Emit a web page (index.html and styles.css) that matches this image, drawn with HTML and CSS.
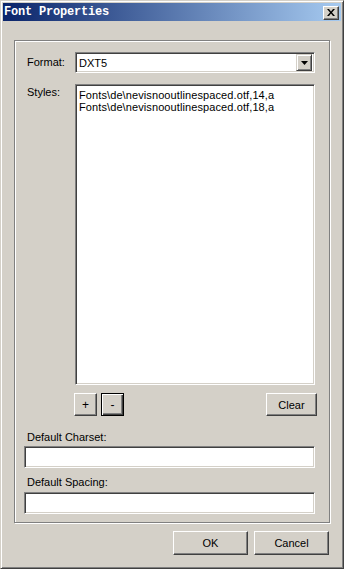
FILE: index.html
```html
<!DOCTYPE html>
<html lang="en">
<head>
    <meta charset="UTF-8">
    <meta name="viewport" content="width=device-width, initial-scale=1.0">
    <title>Font Properties</title>
    <link rel="stylesheet" href="styles.css">
</head>
<body>
    <div class="window">
        <div class="titlebar">
            <span class="title">Font Properties</span>
            <button class="close-btn" aria-label="Close">
                <svg width="8" height="7" viewBox="0 0 8 7">
                    <path d="M0 0h2l2 2.5L6 0h2L5 3.5 8 7H6L4 4.5 2 7H0l3-3.5z" fill="#000"/>
                </svg>
            </button>
        </div>

        <div class="client">
            <div class="group">
                <div class="row">
                    <label class="row-label">Format:</label>
                    <div class="combo sunken">
                        <span class="combo-text">DXT5</span>
                        <span class="drop-btn">
                            <svg width="7" height="4" viewBox="0 0 7 4"><path d="M0 0h7L3.5 4z" fill="#000"/></svg>
                        </span>
                    </div>
                </div>

                <div class="row row-styles">
                    <label class="row-label">Styles:</label>
                    <div class="listbox sunken">
                        <div class="list-item">Fonts\de\nevisnooutlinespaced.otf,14,a</div>
                        <div class="list-item">Fonts\de\nevisnooutlinespaced.otf,18,a</div>
                    </div>
                </div>

                <div class="list-buttons">
                    <button class="btn btn-small">+</button>
                    <button class="btn btn-small btn-default">-</button>
                    <button class="btn btn-clear">Clear</button>
                </div>

                <label class="field-label">Default Charset:</label>
                <div class="edit sunken"></div>

                <label class="field-label field-label-2">Default Spacing:</label>
                <div class="edit sunken edit-2"></div>
            </div>

            <div class="dialog-buttons">
                <button class="btn btn-dialog">OK</button>
                <button class="btn btn-dialog">Cancel</button>
            </div>
        </div>
    </div>
</body>
</html>
```

FILE: styles.css
```css
* {
    box-sizing: border-box;
}
body {
    margin: 0;
    background: #d4d0c8;
    font-family: "Liberation Sans", Arial, sans-serif;
    font-size: 11px;
    color: #000;
}
.window {
    width: 344px;
    height: 569px;
    padding: 2px;
    background: #d4d0c8;
    border: 1px solid;
    border-color: #d4d0c8 #404040 #404040 #d4d0c8;
    box-shadow: inset 1px 1px #fff, inset -1px -1px #808080;
    display: flex;
    flex-direction: column;
}
.titlebar {
    height: 18px;
    display: flex;
    align-items: center;
    justify-content: space-between;
    padding: 0 2px 0 1px;
    background: linear-gradient(to right, #0a246a, #a6caf0);
}
.title {
    color: #fff;
    font-family: "Liberation Mono", "Courier New", monospace;
    font-weight: bold;
    font-size: 12px;
    letter-spacing: -0.2px;
}
.close-btn {
    width: 16px;
    height: 14px;
    padding: 0;
    margin-top: 1px;
    display: flex;
    align-items: center;
    justify-content: center;
    background: #d4d0c8;
    border: 1px solid;
    border-color: #fff #404040 #404040 #fff;
    box-shadow: inset -1px -1px #808080;
}
.client {
    flex: 1;
    padding: 19px 11px 0 11px;
    display: flex;
    flex-direction: column;
}
.group {
    border: 1px solid #808080;
    box-shadow: inset 1px 1px #fff, 1px 1px #fff;
    padding: 11px 14px 8px 9px;
    display: flex;
    flex-direction: column;
}
.row {
    display: flex;
}
.row-label {
    width: 51px;
    flex-shrink: 0;
    padding-left: 3px;
    line-height: 21px;
}
.row-styles {
    margin-top: 11px;
}
.row-styles .row-label {
    line-height: 13px;
    padding-top: 2px;
}
.sunken {
    background: #fff;
    border: 1px solid;
    border-color: #808080 #fff #fff #808080;
    box-shadow: inset 1px 1px #404040, inset -1px -1px #d4d0c8;
}
.combo {
    flex: 1;
    height: 21px;
    display: flex;
    align-items: center;
    padding: 2px;
}
.combo-text {
    flex: 1;
    padding-left: 1px;
}
.drop-btn {
    width: 16px;
    height: 17px;
    display: flex;
    align-items: center;
    justify-content: center;
    background: #d4d0c8;
    border: 1px solid;
    border-color: #d4d0c8 #404040 #404040 #d4d0c8;
    box-shadow: inset 1px 1px #fff, inset -1px -1px #808080;
}
.listbox {
    flex: 1;
    height: 301px;
    padding: 4px 3px;
}
.list-item {
    line-height: 12px;
    white-space: nowrap;
    letter-spacing: 0.1px;
}
.btn {
    font-family: "Liberation Sans", Arial, sans-serif;
    font-size: 11px;
    color: #000;
    background: #d4d0c8;
    border: 1px solid;
    border-color: #fff #404040 #404040 #fff;
    box-shadow: inset -1px -1px #808080;
    padding: 0;
}
.list-buttons {
    display: flex;
    margin-top: 8px;
    padding-left: 50px;
    gap: 4px;
}
.btn-small {
    width: 23px;
    height: 23px;
    font-size: 12px;
}
.btn-default {
    border: 1px solid #000;
    box-shadow: inset 1px 1px #fff, inset -1px -1px #404040, inset -2px -2px #808080;
}
.btn-clear {
    width: 51px;
    height: 23px;
    margin-left: auto;
    margin-right: -2px;
}
.field-label {
    display: block;
    margin-top: 15px;
    padding-left: 3px;
    line-height: 13px;
}
.field-label-2 {
    margin-top: 8px;
}
.edit {
    height: 22px;
    margin-top: 2px;
}
.edit-2 {
    margin-top: 3px;
}
.dialog-buttons {
    display: flex;
    justify-content: flex-end;
    gap: 6px;
    margin-top: 8px;
    padding-right: 1px;
}
.btn-dialog {
    width: 75px;
    height: 24px;
}
```
